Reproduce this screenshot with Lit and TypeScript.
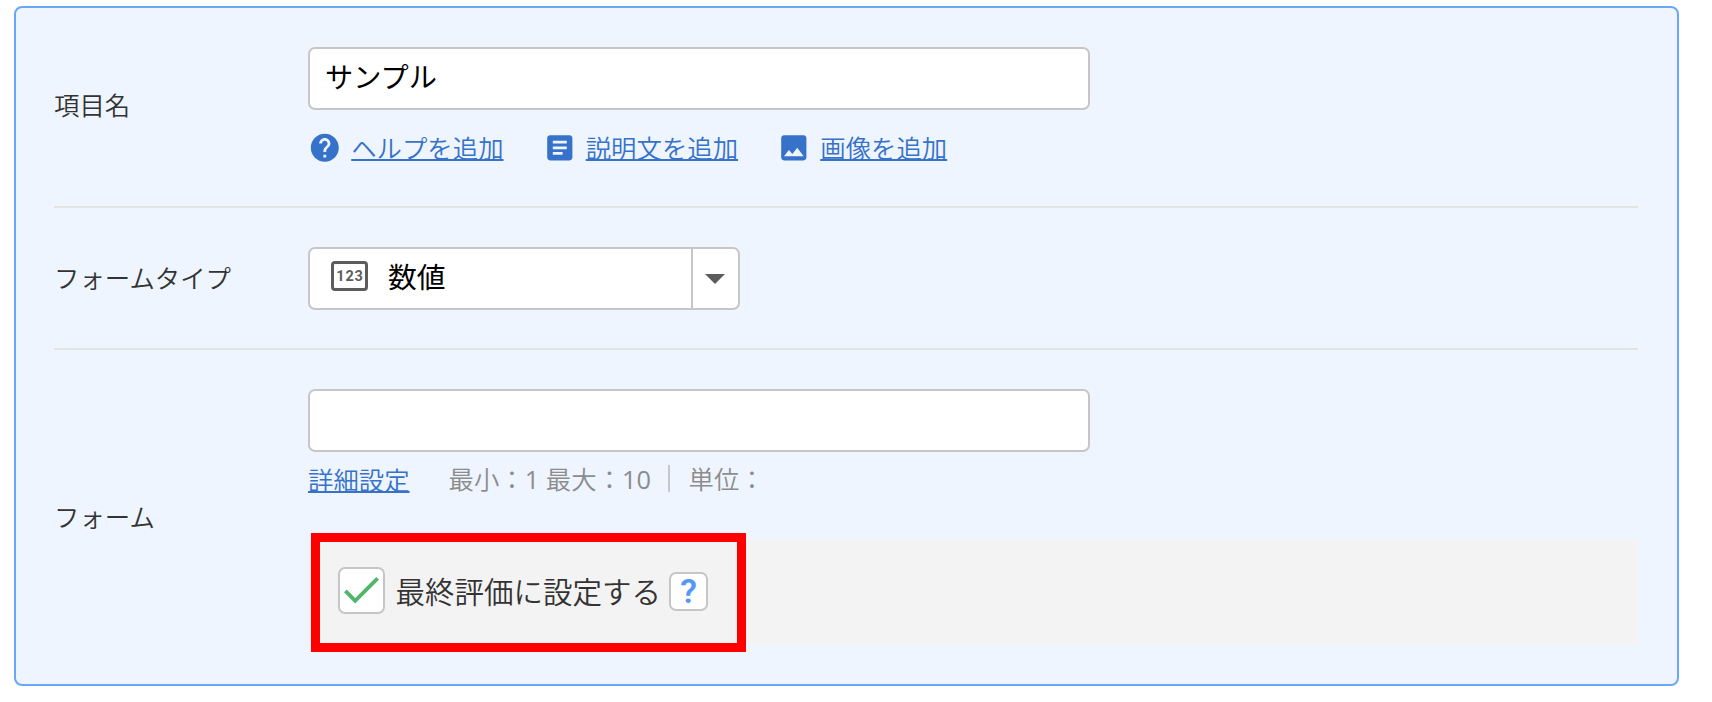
import { css, html, LitElement, svg } from "lit";
import { customElement, property } from "lit/decorators.js";

const icons: Record<string, unknown> = {
  help: svg`<path d="M12 2C6.48 2 2 6.48 2 12s4.48 10 10 10 10-4.48 10-10S17.52 2 12 2zm1 17h-2v-2h2v2zm2.07-7.75l-.9.92C13.45 12.9 13 13.5 13 15h-2v-.5c0-1.1.45-2.1 1.17-2.83l1.24-1.26c.37-.36.59-.86.59-1.41 0-1.1-.9-2-2-2s-2 .9-2 2H8c0-2.21 1.79-4 4-4s4 1.79 4 4c0 .88-.36 1.68-.93 2.25z" />`,
  article: svg`<path d="M19 3H5c-1.1 0-2 .9-2 2v14c0 1.1.9 2 2 2h14c1.1 0 2-.9 2-2V5c0-1.1-.9-2-2-2zm-5 14H7v-2h7v2zm3-4H7v-2h10v2zm0-4H7V7h10v2z" />`,
  image: svg`<path d="M21 19V5c0-1.1-.9-2-2-2H5c-1.1 0-2 .9-2 2v14c0 1.1.9 2 2 2h14c1.1 0 2-.9 2-2zM8.5 13.5l2.5 3.01L14.5 12l4.5 6H5l3.5-4.5z" />`,
};

@customElement("icon-link")
class IconLinkElement extends LitElement {
  @property()
  icon: string = "help";

  render() {
    return html`
      <svg viewBox="0 0 24 24">${icons[this.icon]}</svg>
      <a><slot></slot></a>
    `;
  }

  static styles = css`
    :host {
      display: flex;
      align-items: center;
      gap: 9.6px;
      color: #3672c9;
      white-space: nowrap;
    }
    svg {
      width: 33.6px;
      height: 33.6px;
      fill: currentColor;
    }
    a {
      padding-bottom: 2px;
      text-decoration: underline;
      text-decoration-thickness: 2px;
      text-decoration-skip-ink: none;
      text-underline-offset: 1px;
    }
  `;
}

@customElement("form-row")
class FormRowElement extends LitElement {
  @property()
  label: string = "";

  render() {
    return html`
      <div class="label">${this.label}</div>
      <div class="field"><slot></slot></div>
    `;
  }

  static styles = css`
    :host {
      box-sizing: border-box;
      display: grid;
      grid-template-columns: 254px 1fr;
      align-items: center;
      padding: 39px 0;
      border-bottom: 2px solid #e2e4e6;
    }
    :host(:last-of-type) {
      border-bottom: none;
    }
    .label {
      padding-bottom: var(--label-lift, 2px);
      color: #333;
    }
  `;
}

@customElement("app-root")
class AppRootElement extends LitElement {
  render() {
    return html`
      <section class="panel">
        <form-row class="name-row" label="項目名">
          <input type="text" value="サンプル" />
          <div class="links">
            <icon-link icon="help">ヘルプを追加</icon-link>
            <icon-link icon="article">説明文を追加</icon-link>
            <icon-link icon="image">画像を追加</icon-link>
          </div>
        </form-row>

        <form-row class="type-row" label="フォームタイプ">
          <div class="select">
            <div class="value">
              <span class="number-icon">123</span>
              <span>数値</span>
            </div>
            <div class="toggle">
              <svg viewBox="0 0 20 10"><path d="M0 0h20L10 10z" /></svg>
            </div>
          </div>
        </form-row>

        <form-row class="form-row" label="フォーム">
          <input type="text" />
          <div class="details">
            <a>詳細設定</a>
            <span class="range">最小：<b>1 </b>最大：<b>10</b></span>
            <span class="unit">単位：</span>
          </div>
          <div class="option">
            <span class="checkbox">
              <svg viewBox="0 0 44 44"><path d="M5.5 22.5 15.5 32.5 38.5 9.5" /></svg>
            </span>
            <span class="option-label">最終評価に設定する</span>
            <span class="hint">?</span>
            <div class="highlight"></div>
          </div>
        </form-row>
      </section>
    `;
  }

  static styles = css`
    :host {
      display: block;
      box-sizing: border-box;
      height: 702px;
      padding: 6px 33px 16px 14px;
      background: #fff;
      color: #333;
      font-family: "Noto Sans CJK JP", sans-serif;
      font-size: 25.4px;
      font-weight: 350;
      line-height: 36px;
    }
    .panel {
      box-sizing: border-box;
      height: 680px;
      padding: 0 39px 0 38px;
      border: 2px solid #6ba7f7;
      border-radius: 8px;
      background: #eef5ff;
    }
    .name-row {
      --label-lift: 6px;
      height: 200px;
    }
    .type-row {
      height: 142px;
    }
    .form-row {
      height: 334px;
    }
    input {
      display: block;
      box-sizing: border-box;
      width: 782px;
      height: 62.5px;
      padding: 0 15px 6px;
      border: 2px solid #c6c6c6;
      border-radius: 7px;
      background: #fff;
      color: #000;
      font: inherit;
      font-size: 28.2px;
      font-weight: 400;
    }
    .links {
      display: flex;
      gap: 39px;
      height: 57.5px;
      padding-top: 20px;
      box-sizing: border-box;
    }
    .select {
      display: flex;
      box-sizing: border-box;
      width: 431.5px;
      height: 62.5px;
      border: 2px solid #c6c6c6;
      border-radius: 7px;
      background: #fff;
      color: #000;
      font-size: 28.8px;
      font-weight: 400;
    }
    .value {
      flex: 1;
      display: flex;
      align-items: center;
      gap: 20px;
      padding: 0 0 4px 21px;
    }
    .number-icon {
      box-sizing: border-box;
      width: 37px;
      height: 30px;
      border: 3.5px solid #5c5c5c;
      border-radius: 4px;
      color: #5c5c5c;
      font-family: Roboto, sans-serif;
      font-size: 14.5px;
      font-weight: 700;
      letter-spacing: 0.9px;
      line-height: 25px;
      text-align: center;
      text-indent: 1px;
    }
    .toggle {
      display: flex;
      align-items: center;
      justify-content: center;
      width: 45px;
      padding-top: 1px;
      border-left: 2px solid #c6c6c6;
    }
    .toggle svg {
      width: 20px;
      height: 10px;
      fill: #5c5c5c;
    }
    .details {
      display: flex;
      align-items: center;
      box-sizing: border-box;
      height: 87.5px;
      padding-bottom: 33px;
      color: #8c8c8c;
    }
    .details a {
      margin-right: 39px;
      color: #3672c9;
      text-decoration: underline;
      text-decoration-thickness: 2px;
      text-decoration-skip-ink: none;
      text-underline-offset: 1px;
    }
    .range b {
      font-family: "Open Sans", sans-serif;
      font-weight: 400;
    }
    .unit {
      margin-left: 17px;
      padding-left: 18.5px;
      border-left: 2px solid #c4c7cb;
      line-height: 27px;
    }
    .option {
      position: relative;
      display: flex;
      align-items: center;
      box-sizing: border-box;
      height: 106px;
      padding: 0 29.5px 3px;
      border-radius: 8px;
      background: #f3f3f3;
    }
    .checkbox,
    .hint {
      display: flex;
      align-items: center;
      justify-content: center;
      box-sizing: border-box;
      border: 2px solid #c6c6c6;
      border-radius: 7px;
      background: #fff;
    }
    .checkbox {
      width: 47px;
      height: 47px;
    }
    .checkbox svg {
      width: 43px;
      height: 43px;
      fill: none;
      stroke: #52b66a;
      stroke-width: 4;
    }
    .option-label {
      margin: 0 8px 0 11px;
      padding-bottom: 2px;
      font-size: 29.5px;
    }
    .hint {
      width: 39px;
      height: 39px;
      margin-top: 1px;
      color: #5798f7;
      font-family: Roboto, sans-serif;
      font-size: 34px;
      font-weight: 600;
    }
    /* callout frame lying over the option */
    .highlight {
      position: absolute;
      top: -6px;
      left: 3px;
      box-sizing: border-box;
      width: 435px;
      height: 119px;
      border: 9px solid #f00;
    }
  `;
}
